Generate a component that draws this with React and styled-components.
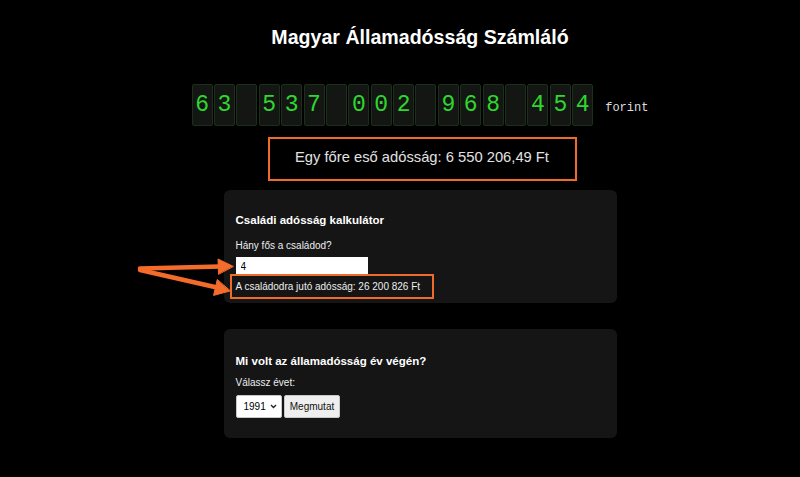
import React from "react";
import styled, { createGlobalStyle } from "styled-components";

const Global = createGlobalStyle`
  html, body { margin: 0; padding: 0; background: #000; }
  body { font-family: "Liberation Sans", Arial, sans-serif; color: #eee; }
`;

const Page = styled.div`
  position: relative;
  box-sizing: border-box;
  min-height: 477px;
  padding: 26px 0 30px 40px;
  display: flex;
  flex-direction: column;
  align-items: center;
`;

const Title = styled.h1`
  margin: 0;
  font-size: 19.6px;
  font-weight: bold;
  color: #fff;
  line-height: normal;
`;

const CounterRow = styled.div`
  margin-top: 34.5px;
  display: flex;
  align-items: baseline;
`;

const Digits = styled.div`
  display: flex;
  gap: 1.4px;
`;

const Cell = styled.span`
  box-sizing: border-box;
  width: 21px;
  height: 42px;
  line-height: 40px;
  text-align: center;
  font-family: "Liberation Mono", "Courier New", monospace;
  font-size: 23px;
  color: #2fd62f;
  background: #141614;
  border: 1px solid #1a301a;
  border-radius: 2px;
`;

const Unit = styled.span`
  margin-left: 12px;
  font-family: "Liberation Mono", "Courier New", monospace;
  font-size: 12px;
  color: #ddd;
`;

const PerCapita = styled.div`
  margin: 11.5px 0 0 4px;
  box-sizing: border-box;
  width: 309px;
  border: 2px solid #ee6b2c;
  padding: 9.7px 0 14.4px;
  text-align: center;
  font-size: 14.74px;
  line-height: normal;
  color: #e2e2e2;
`;

const Card = styled.section`
  box-sizing: border-box;
  width: 393px;
  margin-top: ${(p) => p.$gap}px;
  padding: ${(p) => p.$top}px 12px ${(p) => p.$bottom}px;
  background: #151515;
  border-radius: 6px;
  display: flex;
  flex-direction: column;
  align-items: flex-start;
`;

const CardTitle = styled.h3`
  margin: 0 0 ${(p) => p.$after}px;
  font-size: 11.53px;
  font-weight: bold;
  line-height: normal;
  color: #fff;
`;

const Label = styled.label`
  display: block;
  margin: 0 0 6px;
  font-size: 10px;
  line-height: 11.5px;
  color: #eee;
`;

const NumberInput = styled.input`
  box-sizing: border-box;
  width: 132px;
  height: 18px;
  margin: 0;
  padding: 0 5px;
  border: none;
  outline: none;
  background: #fff;
  font-family: "Liberation Sans", Arial, sans-serif;
  font-size: 10px;
  color: #000;
`;

const Result = styled.div`
  position: relative;
  margin-top: 5.4px;
  font-size: 10px;
  line-height: 11.5px;
  color: #eee;
`;

const Highlight = styled.span`
  position: absolute;
  left: -6px;
  top: -6.4px;
  width: 204px;
  height: 25px;
  box-sizing: border-box;
  border: 2px solid #ee6b2c;
  pointer-events: none;
`;

const Controls = styled.div`
  display: flex;
  gap: 2.5px;
`;

const SelectWrap = styled.div`
  position: relative;
  width: 46px;
  height: 23px;
`;

const YearSelect = styled.select`
  appearance: none;
  -webkit-appearance: none;
  box-sizing: border-box;
  width: 46px;
  height: 23px;
  margin: 0;
  padding: 0 0 0 7px;
  background: #fff;
  border: 1px solid #c8c8c8;
  border-radius: 2px;
  font-family: "Liberation Sans", Arial, sans-serif;
  font-size: 10px;
  color: #000;
`;

const Chevron = styled.svg`
  position: absolute;
  right: 5px;
  top: 9px;
  pointer-events: none;
`;

const ShowButton = styled.button`
  box-sizing: border-box;
  width: 56px;
  height: 23px;
  margin: 0;
  padding: 0;
  background: #efefef;
  border: 1px solid #c8c8c8;
  border-radius: 2px;
  font-family: "Liberation Sans", Arial, sans-serif;
  font-size: 10px;
  color: #111;
`;

const Arrows = styled.svg`
  position: absolute;
  left: 0;
  top: 0;
  pointer-events: none;
`;

const digits = "63 537 002 968 454".split("");

export default function App() {
  return (
    <>
      <Global />
      <Page>
        <Title>Magyar Államadósság Számláló</Title>
        <CounterRow>
          <Digits>
            {digits.map((d, i) => (
              <Cell key={i}>{d === " " ? "\u00a0" : d}</Cell>
            ))}
          </Digits>
          <Unit>forint</Unit>
        </CounterRow>
        <PerCapita>Egy főre eső adósság: 6 550 206,49 Ft</PerCapita>

        <Card $gap={8.5} $top={24.5} $bottom={11}>
          <CardTitle $after={13.7}>Családi adósság kalkulátor</CardTitle>
          <Label htmlFor="family">Hány fős a családod?</Label>
          <NumberInput id="family" type="text" defaultValue="4" />
          <Result>
            A családodra jutó adósság: 26 200 826 Ft
            <Highlight />
          </Result>
        </Card>

        <Card $gap={26} $top={25.5} $bottom={20}>
          <CardTitle $after={10.7}>Mi volt az államadósság év végén?</CardTitle>
          <Label htmlFor="year">Válassz évet:</Label>
          <Controls>
            <SelectWrap>
              <YearSelect id="year" defaultValue="1991">
                <option value="1991">1991</option>
                <option value="1992">1992</option>
              </YearSelect>
              <Chevron width="7" height="5" viewBox="0 0 7 5">
                <path d="M1 1l2.5 2.5L6 1" fill="none" stroke="#222" strokeWidth="1.4" />
              </Chevron>
            </SelectWrap>
            <ShowButton type="button">Megmutat</ShowButton>
          </Controls>
        </Card>

        <Arrows width="800" height="477" viewBox="0 0 800 477">
          <g fill="#f36c2b" stroke="#f36c2b" strokeLinecap="round">
            <line x1="140" y1="268.5" x2="220" y2="266.5" strokeWidth="4.5" />
            <polygon points="233,266.3 218,259 218.5,274" strokeWidth="1" />
            <line x1="140" y1="270" x2="217" y2="287.5" strokeWidth="4.5" />
            <polygon points="230,291 213.6,295.4 217.2,279.8" strokeWidth="1" />
          </g>
        </Arrows>
      </Page>
    </>
  );
}
